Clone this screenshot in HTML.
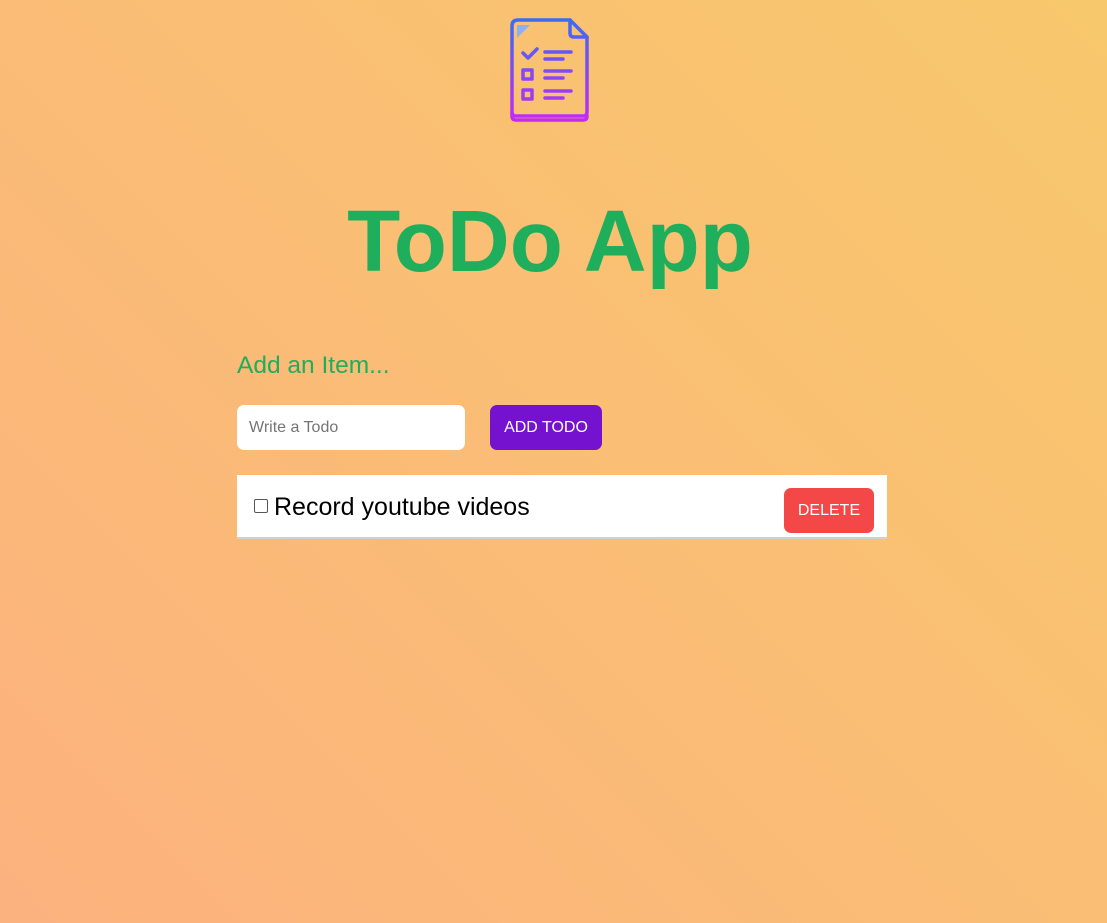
<!DOCTYPE html>
<html><head><style>
html,body{margin:0;height:100%}
body{width:1107px;height:923px;overflow:hidden;position:relative;font-family:"Liberation Sans",Arial,sans-serif;background:linear-gradient(45deg,#fcb27e 0%,#f8c86c 100%)}
.t{position:absolute;left:0;width:1100px;text-align:center;top:192px;font-size:87px;font-weight:bold;color:#1fae5c;line-height:100px}
.sub{position:absolute;left:237px;top:352px;font-size:24.5px;color:#1fae5c}
.inp{position:absolute;left:237px;top:405px;width:228px;height:45px;background:#fff;border-radius:7px;font-size:16px;color:#757575;line-height:45px;box-sizing:border-box;padding-left:12px}
.add{position:absolute;left:490px;top:405px;width:112px;height:45px;background:#7412cf;border-radius:7px;color:#fff;font-size:16px;line-height:45px;text-align:center}
.row{position:absolute;left:237px;top:475px;width:650px;height:64px;background:#fff;border-bottom:2px solid #d0d0d0;box-sizing:border-box}
.cb{position:absolute;left:17px;top:24px;width:12px;height:12px;border:1px solid #555;border-radius:2px;background:#fff}
.txt{position:absolute;left:37px;top:18px;font-size:25px;color:#000}
.del{position:absolute;left:547px;top:13px;width:90px;height:45px;background:#f44848;border-radius:7px;color:#fff;font-size:16px;line-height:45px;text-align:center}
</style></head><body>
<svg style="position:absolute;left:508px;top:16px" width="84" height="110" viewBox="0 0 84 110">
<defs><linearGradient id="g" gradientUnits="userSpaceOnUse" x1="0" y1="4" x2="0" y2="105"><stop offset="0" stop-color="#3a6cf5"/><stop offset="1" stop-color="#c42af5"/></linearGradient></defs>
<g fill="none" stroke="url(#g)" stroke-width="3.5" stroke-linecap="round" stroke-linejoin="round">
<path d="M10 4 H62 L79 21 V96 Q79 100 75 100 H8 Q4 100 4 96 V10 Q4 4 10 4 Z"/>
<path d="M62 4 V17 Q62 21 66 21 H79"/>
<path d="M4 96 V100 Q4 104 8 104 H75 Q79 104 79 100"/>
<path d="M15 37 L20 42 L29 33"/>
<path d="M37 36 H63 M37 43 H55"/>
<rect x="15" y="54" width="9" height="9"/>
<path d="M37 55 H63 M37 62 H55"/>
<rect x="15" y="74" width="9" height="9"/>
<path d="M37 75 H63 M37 82 H55"/>
</g>
<path d="M9 9 H22 L9 22 Z" fill="#8fb0f0"/>
</svg>
<div class="t">ToDo App</div>
<div class="sub">Add an Item...</div>
<div class="inp">Write a Todo</div>
<div class="add">ADD TODO</div>
<div class="row"><div class="cb"></div><div class="txt">Record youtube videos</div><div class="del">DELETE</div></div>
</body></html>
